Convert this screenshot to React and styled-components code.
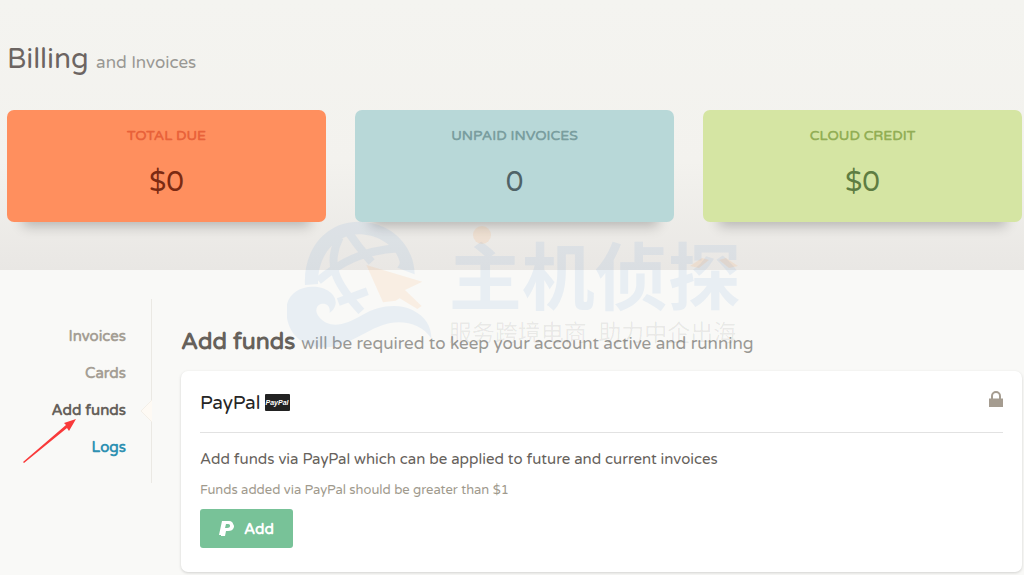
import React from "react";
import styled, { createGlobalStyle } from "styled-components";

const GlobalStyle = createGlobalStyle`
  * {
    box-sizing: border-box;
  }
  body {
    margin: 0;
    background: #f9f9f7;
    color: #66615b;
    font-family: "Varela Round", "Noto Sans", "Open Sans", sans-serif;
  }
  h1, h2, h3, p, ul {
    margin: 0;
    padding: 0;
    font-weight: 400;
  }
`;

const Page = styled.div`
  position: relative;
  overflow: hidden;
`;
const Hero = styled.header`
  padding: 41px 2px 48px 7px;
  background: linear-gradient(#f4f4f0 0%, #f3f2ee 60%, #e9e7e4 100%);
`;
const Title = styled.h1`
  font-size: 28px;
  line-height: 36px;
  color: #6c6562;
`;
const Muted = styled.small`
  font-size: 17px;
  font-weight: 400;
  line-height: 1;
  color: #999894;
`;
const Stats = styled.section`
  display: grid;
  grid-template-columns: repeat(3, 1fr);
  gap: 29px;
  margin-top: 33px;
`;
const Stat = styled.div`
  display: flex;
  flex-direction: column;
  align-items: center;
  height: 112px;
  padding-top: 16px;
  border-radius: 7px;
  background: ${(p) => p.$bg};
  color: ${(p) => p.$color};
  box-shadow: 0 20px 12px -16px rgba(0, 0, 0, 0.24);
`;
const StatLabel = styled.h3`
  font-size: 14px;
  font-weight: 700;
  line-height: 20px;
  text-transform: uppercase;
  color: ${(p) => p.$color};
`;
const StatValue = styled.p`
  margin-top: 16px;
  font-size: 28px;
  line-height: 40px;
`;

const Body = styled.div`
  display: flex;
  align-items: flex-start;
  gap: 29px;
  padding: 29px 2px 3px 0;
`;
const Nav = styled.nav`
  flex: 0 0 152px;
  padding: 19px 0 17px;
  border-right: 1px solid #ebe9e4;
`;
const NavList = styled.ul`
  list-style: none;
`;
const NavItem = styled.li`
  position: relative;
  line-height: 37px;
  padding-right: 25px;
  text-align: right;
`;
const NavLink = styled.a`
  font-size: 15px;
  font-weight: 700;
  text-decoration: none;
  color: ${(p) => p.$color || "#a59f95"};
`;
const Notch = styled.svg`
  position: absolute;
  top: 8px;
  right: -1px;
`;
const Main = styled.main`
  flex: 1;
  min-width: 0;
`;
const Heading = styled.h2`
  padding-top: 27px;
  font-size: 23px;
  font-weight: 700;
  line-height: 32px;
  color: #66615b;
`;
const Card = styled.section`
  margin-top: 13px;
  padding: 0 19px 24px;
  border-radius: 7px;
  background: #fff;
  box-shadow: 0 1px 3px rgba(0, 0, 0, 0.16);
`;
const CardHead = styled.div`
  display: flex;
  align-items: center;
  gap: 4px;
  height: 62px;
  padding-top: 2px;
  border-bottom: 1px solid #e2e2e2;
`;
const Method = styled.h3`
  font-size: 19px;
  line-height: 28px;
  color: #262626;
`;
const Badge = styled.span`
  width: 25px;
  border-radius: 1px;
  background: #222;
  color: #fff;
  font: italic 700 7px/17px "Liberation Sans", sans-serif;
  text-align: center;
`;
const Lock = styled.svg`
  margin: 0 0 8px auto;
`;
const Lead = styled.p`
  margin-top: 14px;
  font-size: 15px;
  line-height: 24px;
`;
const Hint = styled.p`
  margin-top: 9px;
  font-size: 13px;
  line-height: 20px;
  color: #a09a8d;
`;
const AddButton = styled.button`
  display: flex;
  align-items: center;
  gap: 9px;
  height: 39px;
  margin-top: 9px;
  padding: 0 19px;
  border: 0;
  border-radius: 3px;
  background: #78c298;
  color: #fff;
  font: inherit;
  font-size: 15px;
  font-weight: 700;
`;

const Watermark = styled.div`
  position: absolute;
  top: 220px;
  left: 28%;
  display: flex;
  gap: 16px;
  white-space: nowrap;
  pointer-events: none;
`;
const Brand = styled.div`
  position: relative;
  padding-top: 16px;
  font-family: "Noto Sans CJK SC", sans-serif;
`;
const BrandName = styled.div`
  font-size: 73px;
  font-weight: 700;
  line-height: 72px;
  color: rgba(89, 149, 217, 0.1);
`;
const BrandTag = styled.div`
  font-size: 23px;
  line-height: 46px;
  color: rgba(0, 0, 0, 0.07);
`;
const Accent = styled.svg`
  position: absolute;
  top: 0;
  left: 0;
`;
const Arrow = styled.svg`
  position: absolute;
  top: 416px;
  left: 20px;
  pointer-events: none;
`;

const stats = [
  { label: "Total due", value: "$0", bg: "#ff8f5e", color: "#7b2a12", labelColor: "#e8623a" },
  { label: "Unpaid invoices", value: "0", bg: "#b8d8d8", color: "#4f6367", labelColor: "#7a9e9f" },
  { label: "Cloud credit", value: "$0", bg: "#d5e5a3", color: "#5e7d42", labelColor: "#92ae56" },
];

const links = [
  { label: "Invoices" },
  { label: "Cards" },
  { label: "Add funds", color: "#66615b", active: true },
  { label: "Logs", color: "#3091b2" },
];

const GlobeLogo = () => (
  <svg width="146" height="130" viewBox="24 30 438 390">
    <g opacity="0.1" fill="#5995d9">
      <path d="M78 225C72 120 140 35 238 35c97 0 167 70 169 158l-52-20c6-8 8-12 7-18-12-46-62-82-124-82-73 2-123 67-121 149Z" />
      <g fill="none" stroke="#5995d9" strokeWidth="24">
        <path d="M118 212C180 160 250 120 362 115" />
        <path d="M212 72c20 30 40 55 66 84" />
        <path d="M182 82c-40 80-15 135 65 222" />
        <path d="m178 276 87-32" />
      </g>
      <path d="M22 300c0-45 38-70 78-70 45 0 72 25 70 50-2 15-10 23-18 28 3-23-12-30-27-26-15 6-17 23-7 36 32 42 82 27 132-3s110-35 150-15 57 50 57 85c-27-40-77-55-127-45-60 12-120 70-190 72-70 2-118-42-118-112Z" />
    </g>
    <path
      d="m262 165 168 50-52 25 50 48-13 9-53-32-12 7-38 5Z"
      fill="#ff963c"
      fillOpacity="0.1"
    />
  </svg>
);

const PayPalIcon = () => (
  <svg width="16" height="18" viewBox="0 0 16 18">
    <path
      fill="currentColor"
      fillRule="evenodd"
      d="M3 1h7c3 0 4 2 4 3 1 1 1 2 1 3-1 3-3 4-6 4H7l-1 5H2v-1H0Zm4 3-1 4h2c2 0 3-1 3-2s0-2-2-2Z"
    />
  </svg>
);

const App = () => (
  <Page>
    <GlobalStyle />
    <Hero>
      <Title>
        Billing <Muted>and Invoices</Muted>
      </Title>
      <Stats>
        {stats.map((s) => (
          <Stat key={s.label} $bg={s.bg} $color={s.color}>
            <StatLabel $color={s.labelColor}>{s.label}</StatLabel>
            <StatValue>{s.value}</StatValue>
          </Stat>
        ))}
      </Stats>
    </Hero>
    <Body>
      <Nav>
        <NavList>
          {links.map((l) => (
            <NavItem key={l.label}>
              <NavLink href="#" $color={l.color}>
                {l.label}
              </NavLink>
              {l.active && (
                <Notch width="11" height="22" viewBox="0 0 11 22">
                  <path d="M11 0 0 11l11 11Z" fill="#fefaf4" />
                  <path d="M11 0 0 11l11 11" fill="none" stroke="#f3efe8" />
                </Notch>
              )}
            </NavItem>
          ))}
        </NavList>
      </Nav>
      <Main>
        <Heading>
          Add funds <Muted>will be required to keep your account active and running</Muted>
        </Heading>
        <Card>
          <CardHead>
            <Method>PayPal</Method>
            <Badge>PayPal</Badge>
            <Lock width="14" height="16" viewBox="0 0 14 16">
              <path d="M3 8V5a4 4 0 0 1 8 0v3" fill="none" stroke="#a59c90" strokeWidth="2" />
              <path d="M0 7.500h14V16H0Z" fill="#a59c90" />
            </Lock>
          </CardHead>
          <Lead>Add funds via PayPal which can be applied to future and current invoices</Lead>
          <Hint>Funds added via PayPal should be greater than $1</Hint>
          <AddButton type="button">
            <PayPalIcon />
            Add
          </AddButton>
        </Card>
      </Main>
    </Body>
    <Watermark>
      <GlobeLogo />
      <Brand>
        <BrandName>主机侦探</BrandName>
        <BrandTag>服务跨境电商{"\u2002"}助力中企出海</BrandTag>
        <Accent width="290" height="50" viewBox="0 0 290 50">
          <g fill="#ff963c" fillOpacity="0.12">
            <circle cx="33" cy="15" r="9" />
            <path d="m241 46 12-8 7 2-10 8Zm48 0-12-8-7 2 10 8Z" />
          </g>
        </Accent>
      </Brand>
    </Watermark>
    <Arrow width="60" height="50" viewBox="0 0 60 50">
      <path d="m3 46 43-37-2-2 12-4-7 12-2-3L4 47Z" fill="#f93a3a" />
    </Arrow>
  </Page>
);

export default App;
